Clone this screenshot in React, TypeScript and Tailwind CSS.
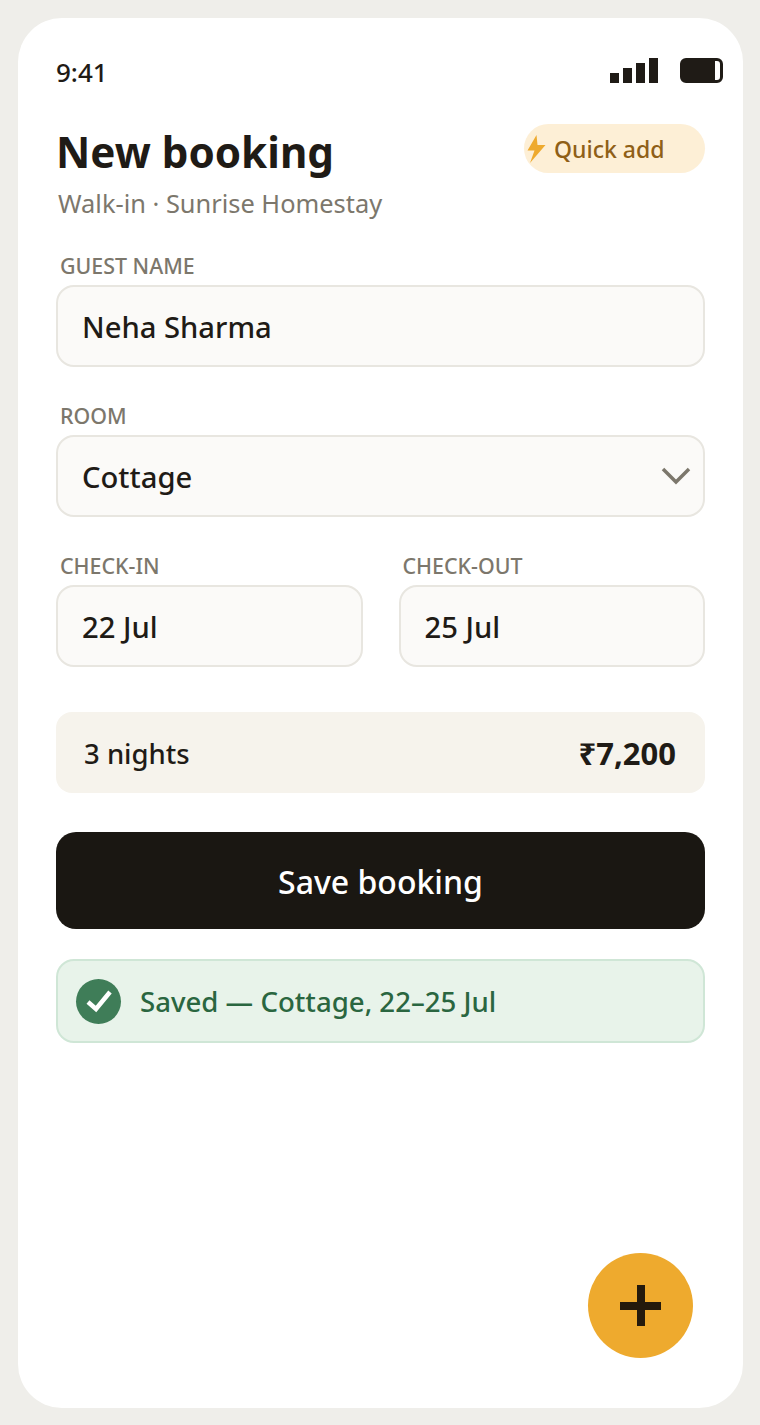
import React from 'react';

const font = { fontFamily: '"Noto Sans", sans-serif' };

const Label: React.FC<{ children: React.ReactNode }> = ({ children }) => (
  <div className="pl-1 text-[21.4px] leading-[30px] font-medium uppercase text-[#7c776c]">{children}</div>
);

const FieldBox: React.FC<{ children: React.ReactNode }> = ({ children }) => (
  <div className="flex h-[82px] items-center justify-between rounded-[18px] border-2 border-[#e8e6e0] bg-[#fbfaf8] pl-[24px] pr-[12px] text-[29.2px] font-medium text-[#1f1b16]">
    {children}
  </div>
);

export default function App() {
  return (
    <div className="min-h-[1425px] bg-[#efeeea] p-[18px] pr-[17px]" style={font}>
      <div className="relative flex h-[1390px] flex-col rounded-[44px] bg-white">
        <div className="mt-[40px] flex h-[25px] items-center justify-between pl-[38px] pr-[20px]">
          <span className="pt-[2px] text-[26px] font-medium leading-[30px] text-[#1f1b16]">9:41</span>
          <div className="flex items-center gap-[22px]">
            <div className="flex items-end gap-[4px]">
              <div className="h-[10px] w-[9px] bg-[#1f1b16]" />
              <div className="h-[15px] w-[9px] bg-[#1f1b16]" />
              <div className="h-[20px] w-[9px] bg-[#1f1b16]" />
              <div className="h-[25px] w-[9px] bg-[#1f1b16]" />
            </div>
            <div className="h-[25px] w-[43px] rounded-[6px] border-[3px] border-[#1f1b16] pr-[5px]">
              <div className="h-full bg-[#1f1b16]" />
            </div>
          </div>
        </div>

        <div className="flex flex-col px-[38px]">
          <div className="mt-[41px] flex items-start justify-between">
            <h1 className="text-[42.2px] font-bold leading-[56px] text-[#1f1b16]">New booking</h1>
            <div className="flex h-[49px] w-[181px] items-center gap-[8px] rounded-full bg-[#fdefd6] pl-[3px]">
              <svg width="19" height="28" viewBox="0 0 19 28" className="shrink-0">
                <polygon points="9.5,0 0.5,15.5 7.5,15.5 3,28 18.5,10 10.5,10" fill="#eeaa2e" />
              </svg>
              <span className="pt-[2px] text-[23px] font-medium text-[#8f5f17]">Quick add</span>
            </div>
          </div>
          <p className="mt-[5px] pl-[2px] text-[25.4px] leading-[36px] text-[#7c776c]">Walk-in · Sunrise Homestay</p>

          <div className="mt-[30px]">
            <Label>Guest name</Label>
            <div className="mt-[4px]">
              <FieldBox>
                <span className="pt-[4px]">Neha Sharma</span>
              </FieldBox>
            </div>
          </div>

          <div className="mt-[34px]">
            <Label>Room</Label>
            <div className="mt-[4px]">
              <FieldBox>
                <span className="pt-[4px]">Cottage</span>
                <svg width="30" height="18" viewBox="0 0 30 18" fill="none">
                  <path d="M2 2 L15 15 L28 2" stroke="#7c776c" strokeWidth="3.5" />
                </svg>
              </FieldBox>
            </div>
          </div>

          <div className="mt-[34px] grid grid-cols-[306.5px_1fr] gap-[36px]">
            <div>
              <Label>Check-in</Label>
              <div className="mt-[4px]">
                <FieldBox>
                  <span className="pt-[4px]">22 Jul</span>
                </FieldBox>
              </div>
            </div>
            <div>
              <Label>Check-out</Label>
              <div className="mt-[4px]">
                <FieldBox>
                  <span className="pt-[4px]">25 Jul</span>
                </FieldBox>
              </div>
            </div>
          </div>

          <div className="mt-[45px] flex h-[81px] items-center justify-between rounded-[16px] bg-[#f6f3ec] pl-[28px] pr-[29px] text-[#1f1b16]">
            <span className="pt-[3px] text-[27.5px] font-medium">3 nights</span>
            <span className="pt-[2px] text-[31px] font-bold">₹7,200</span>
          </div>

          <div className="mt-[39px] flex h-[97px] items-center justify-center rounded-[20px] bg-[#1a1712] pt-[3px] text-[32px] font-medium text-white">
            Save booking
          </div>

          <div className="mt-[30px] flex h-[84px] items-center gap-[19px] rounded-[18px] border-2 border-[#cfe6d6] bg-[#e8f3ea] pl-[18px]">
            <div className="flex h-[45px] w-[45px] items-center justify-center rounded-full bg-[#3f7d58]">
              <svg width="28" height="24" viewBox="0 0 28 24" fill="none">
                <path d="M3 13 L11 20 L25 3" stroke="#ffffff" strokeWidth="4.5" />
              </svg>
            </div>
            <span className="pt-[2px] text-[27.6px] font-medium text-[#2a6640]">Saved — Cottage, 22–25 Jul</span>
          </div>
        </div>

        <div className="absolute left-[570px] top-[1235px] flex h-[105px] w-[105px] items-center justify-center rounded-full bg-[#eeaa2e]">
          <svg width="41" height="41" viewBox="0 0 41 41">
            <rect x="0" y="17" width="41" height="8" fill="#241a0c" />
            <rect x="17" y="0" width="8" height="41" fill="#241a0c" />
          </svg>
        </div>
      </div>
    </div>
  );
}
